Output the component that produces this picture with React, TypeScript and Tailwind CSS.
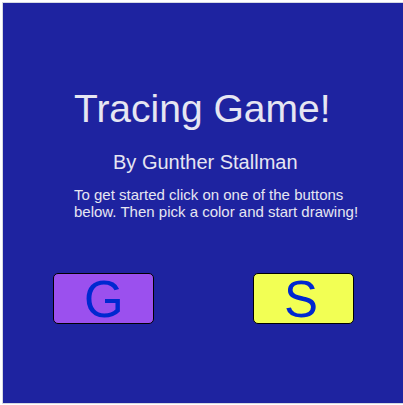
export default function App() {
  return (
    <div className="bg-white pt-[2px] pb-px pl-[2px] font-['Liberation_Sans',Arial,sans-serif]">
      <main className="flex min-h-[402px] flex-col border-y border-l border-[#d5d9e2] bg-[#1e23a0] pt-[83px] pr-[49px] pb-[79px] pl-[50px] text-[#e6e6f2]">
        <h1 className="pl-[21px] text-[39px] leading-[46px]">Tracing Game!</h1>
        <p className="mt-[18px] pl-[60px] text-[20px] leading-6">By Gunther Stallman</p>
        <p className="mt-3 pl-[21px] text-[15px] leading-[17px] whitespace-nowrap">
          To get started click on one of the buttons
          <br />
          below. Then pick a color and start drawing!
        </p>
        <div className="mt-[53px] flex justify-between">
          <button className="h-[51px] w-[101px] rounded-[5px] border border-black bg-[#9b50ee] pt-px pl-[30px] text-left text-[51px] leading-[49px] text-[#0028d0]">G</button>
          <button className="h-[51px] w-[101px] rounded-[5px] border border-black bg-[#f2ff54] pt-px pl-[30px] text-left text-[51px] leading-[49px] text-[#0028d0]">S</button>
        </div>
      </main>
    </div>
  );
}
